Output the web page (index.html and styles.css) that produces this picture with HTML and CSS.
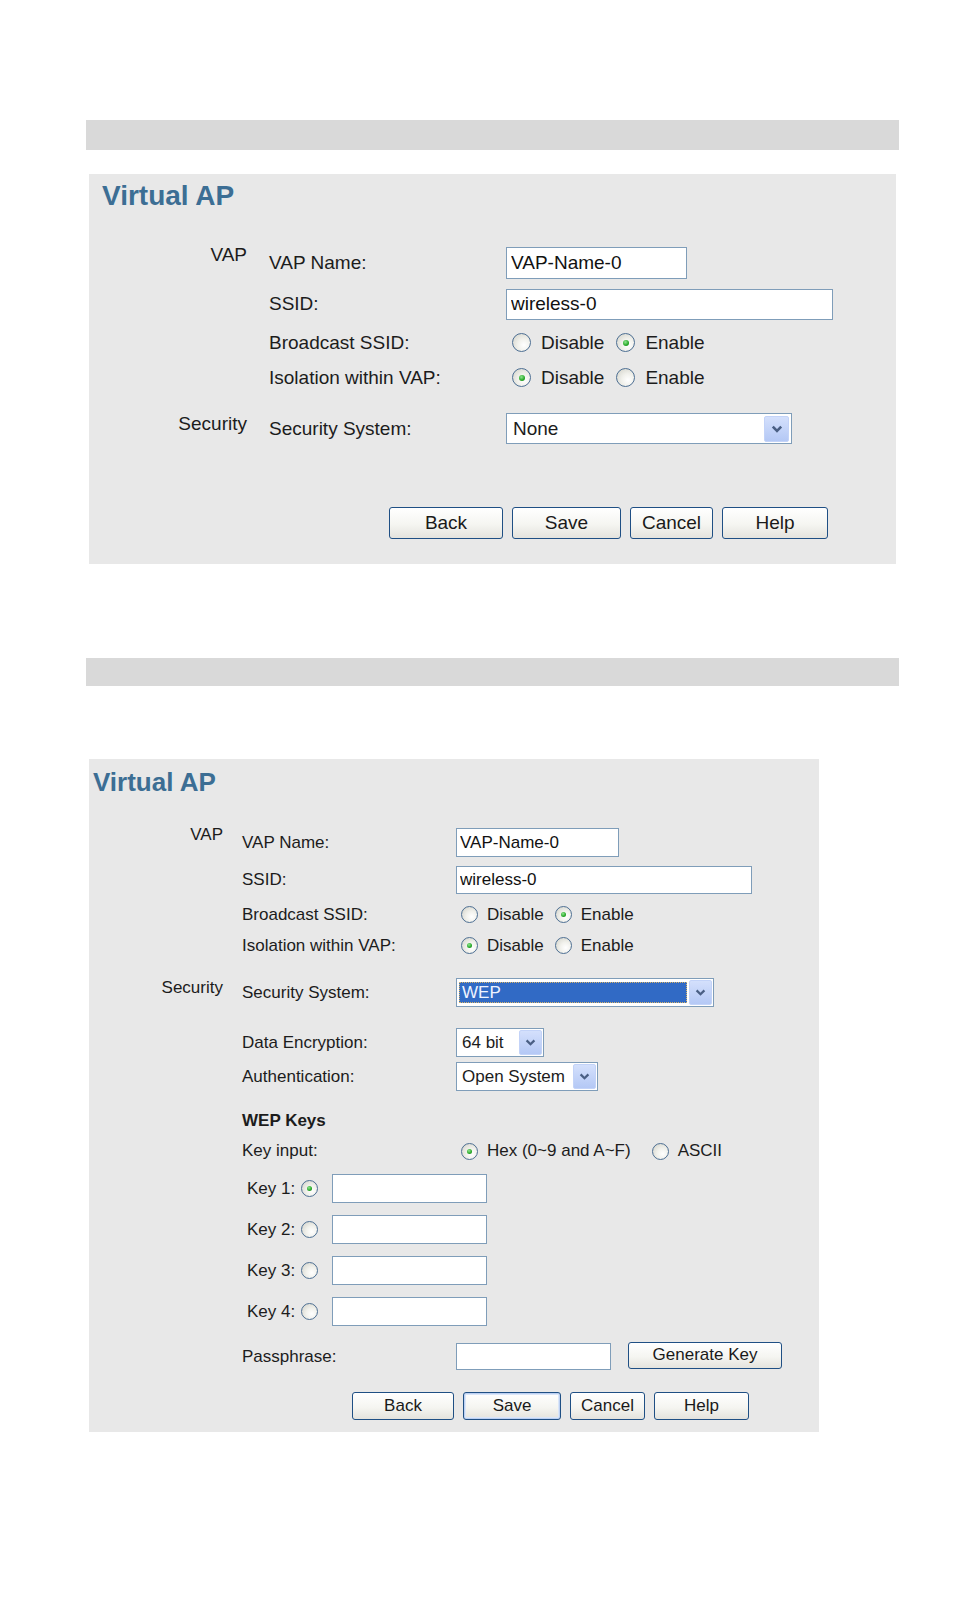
FILE: index.html
```html
<!DOCTYPE html>
<html lang="en">
<head>
    <meta charset="UTF-8">
    <meta name="viewport" content="width=device-width, initial-scale=1.0">
    <title>Virtual AP</title>
    <link rel="stylesheet" href="styles.css">
</head>
<body>
    <div class="page">
        <div class="bar"></div>

        <!-- Virtual AP, security off -->
        <section class="panel panel-a">
            <h2 class="panel-title">Virtual AP</h2>

            <div class="group">
                <div class="group-name">VAP</div>
                <div class="group-rows">
                    <div class="row row-name">
                        <span class="row-label">VAP Name:</span>
                        <input class="textbox box-name" type="text" value="VAP-Name-0">
                    </div>
                    <div class="row row-ssid">
                        <span class="row-label">SSID:</span>
                        <input class="textbox box-ssid" type="text" value="wireless-0">
                    </div>
                    <div class="row row-radio">
                        <span class="row-label">Broadcast SSID:</span>
                        <span class="choices">
                            <span class="opt"><span class="radio"></span>Disable</span>
                            <span class="opt"><span class="radio on"></span>Enable</span>
                        </span>
                    </div>
                    <div class="row row-radio">
                        <span class="row-label">Isolation within VAP:</span>
                        <span class="choices">
                            <span class="opt"><span class="radio on"></span>Disable</span>
                            <span class="opt"><span class="radio"></span>Enable</span>
                        </span>
                    </div>
                </div>
            </div>

            <div class="group group-security">
                <div class="group-name">Security</div>
                <div class="group-rows">
                    <div class="row row-select">
                        <span class="row-label">Security System:</span>
                        <div class="select sel-security">
                            <span class="select-value">None</span>
                            <span class="select-arrow">
                                <svg width="12" height="8" viewBox="0 0 12 8"><path d="M1.8 1.6 L6 5.8 L10.2 1.6" fill="none" stroke="#4a5f84" stroke-width="2.6"/></svg>
                            </span>
                        </div>
                    </div>
                </div>
            </div>

            <div class="actions">
                <button class="btn btn-back">Back</button>
                <button class="btn btn-save">Save</button>
                <button class="btn btn-cancel">Cancel</button>
                <button class="btn btn-help">Help</button>
            </div>
        </section>

        <div class="bar bar-second"></div>

        <!-- Virtual AP, WEP selected -->
        <section class="panel panel-b">
            <h2 class="panel-title">Virtual AP</h2>

            <div class="group">
                <div class="group-name">VAP</div>
                <div class="group-rows">
                    <div class="row row-name">
                        <span class="row-label">VAP Name:</span>
                        <input class="textbox box-name" type="text" value="VAP-Name-0">
                    </div>
                    <div class="row row-ssid">
                        <span class="row-label">SSID:</span>
                        <input class="textbox box-ssid" type="text" value="wireless-0">
                    </div>
                    <div class="row row-radio">
                        <span class="row-label">Broadcast SSID:</span>
                        <span class="choices">
                            <span class="opt"><span class="radio"></span>Disable</span>
                            <span class="opt"><span class="radio on"></span>Enable</span>
                        </span>
                    </div>
                    <div class="row row-radio">
                        <span class="row-label">Isolation within VAP:</span>
                        <span class="choices">
                            <span class="opt"><span class="radio on"></span>Disable</span>
                            <span class="opt"><span class="radio"></span>Enable</span>
                        </span>
                    </div>
                </div>
            </div>

            <div class="group group-security">
                <div class="group-name">Security</div>
                <div class="group-rows">
                    <div class="row row-select">
                        <span class="row-label">Security System:</span>
                        <div class="select sel-security">
                            <span class="select-value picked">WEP</span>
                            <span class="select-arrow">
                                <svg width="11" height="7" viewBox="0 0 11 7"><path d="M1.6 1.4 L5.5 5.2 L9.4 1.4" fill="none" stroke="#4a5f84" stroke-width="2.3"/></svg>
                            </span>
                        </div>
                    </div>
                    <div class="row row-enc">
                        <span class="row-label">Data Encryption:</span>
                        <div class="select sel-enc">
                            <span class="select-value">64 bit</span>
                            <span class="select-arrow">
                                <svg width="11" height="7" viewBox="0 0 11 7"><path d="M1.6 1.4 L5.5 5.2 L9.4 1.4" fill="none" stroke="#4a5f84" stroke-width="2.3"/></svg>
                            </span>
                        </div>
                    </div>
                    <div class="row row-auth">
                        <span class="row-label">Authentication:</span>
                        <div class="select sel-auth">
                            <span class="select-value">Open System</span>
                            <span class="select-arrow">
                                <svg width="11" height="7" viewBox="0 0 11 7"><path d="M1.6 1.4 L5.5 5.2 L9.4 1.4" fill="none" stroke="#4a5f84" stroke-width="2.3"/></svg>
                            </span>
                        </div>
                    </div>

                    <div class="row row-heading">WEP Keys</div>
                    <div class="row row-keyinput">
                        <span class="row-label">Key input:</span>
                        <span class="choices choices-wide">
                            <span class="opt"><span class="radio on"></span>Hex (0~9 and A~F)</span>
                            <span class="opt"><span class="radio"></span>ASCII</span>
                        </span>
                    </div>
                    <div class="row row-key">
                        <span class="key-label">Key 1:</span>
                        <span class="radio on"></span>
                        <input class="textbox box-key" type="text" value="">
                    </div>
                    <div class="row row-key">
                        <span class="key-label">Key 2:</span>
                        <span class="radio"></span>
                        <input class="textbox box-key" type="text" value="">
                    </div>
                    <div class="row row-key">
                        <span class="key-label">Key 3:</span>
                        <span class="radio"></span>
                        <input class="textbox box-key" type="text" value="">
                    </div>
                    <div class="row row-key">
                        <span class="key-label">Key 4:</span>
                        <span class="radio"></span>
                        <input class="textbox box-key" type="text" value="">
                    </div>
                    <div class="row row-pass">
                        <span class="row-label">Passphrase:</span>
                        <input class="textbox box-pass" type="text" value="">
                        <button class="btn btn-generate">Generate Key</button>
                    </div>
                </div>
            </div>

            <div class="actions">
                <button class="btn btn-back">Back</button>
                <button class="btn btn-save btn-default">Save</button>
                <button class="btn btn-cancel">Cancel</button>
                <button class="btn btn-help">Help</button>
            </div>
        </section>
    </div>
</body>
</html>
```

FILE: styles.css
```css
* {
    box-sizing: border-box;
}

body {
    margin: 0;
    background: #ffffff;
    font-family: "Liberation Sans", Arial, sans-serif;
    color: #1c1c1c;
}

.page {
    padding-top: 120px;
    padding-bottom: 40px;
}

.bar {
    margin-left: 86px;
    width: 813px;
    height: 30px;
    background: #d9d9d9;
}

.bar-second {
    margin-top: 94px;
    height: 28px;
}

.panel {
    margin-left: 89px;
    background: #e8e8e8;
}

.panel-a {
    width: 807px;
    margin-top: 24px;
    padding: 5px 0 25px;
    font-size: 19px;
}

.panel-b {
    width: 730px;
    margin-top: 73px;
    padding: 8px 0 12px;
    font-size: 17px;
}

.panel-title {
    margin: 0;
    font-weight: bold;
    color: #3c6e94;
}

.panel-a .panel-title {
    font-size: 28px;
    line-height: 34px;
    padding-left: 13px;
    margin-bottom: 30px;
}

.panel-b .panel-title {
    font-size: 26px;
    line-height: 30px;
    padding-left: 4px;
    margin-bottom: 27px;
}

/* section column + rows */
.group {
    display: flex;
}

.group-name {
    flex: none;
    text-align: right;
    line-height: 1;
    padding-top: 2px;
}

.group-security .group-name {
    padding-top: 5px;
}

.panel-a .group-name {
    width: 158px;
    margin-right: 22px;
}

.panel-b .group-name {
    width: 134px;
    margin-right: 19px;
}

.panel-a .group-security {
    margin-top: 13.5px;
}

.panel-b .group-security {
    margin-top: 13px;
}

.group-rows {
    flex: 1;
}

.row {
    display: flex;
    align-items: center;
}

.row-label {
    flex: none;
}

.panel-a .row-label {
    width: 237px;
}

.panel-b .row-label {
    width: 214px;
}

/* row heights */
.panel-a .row-name { height: 40px; }
.panel-a .row-ssid { height: 42px; }
.panel-a .row-radio { height: 35px; }
.panel-a .row-select { height: 40px; }

.panel-b .row-name { height: 37px; }
.panel-b .row-ssid { height: 38px; }
.panel-b .row-radio { height: 31px; }
.panel-b .row-select { height: 37px; }
.panel-b .row-enc { height: 37px; margin-top: 13px; }
.panel-b .row-auth { height: 31px; }
.panel-b .row-heading { height: 27px; margin-top: 15px; font-weight: bold; }
.panel-b .row-keyinput { height: 34px; }
.panel-b .row-key { height: 41px; padding-left: 5px; }
.panel-b .row-pass { height: 41px; margin-top: 4px; }

/* text boxes */
.textbox {
    margin: 0;
    border: 1px solid #7f9db9;
    background: #ffffff;
    font: inherit;
    color: #111111;
    padding: 0 3px;
    outline: none;
}

.panel-a .textbox {
    padding-left: 4px;
}

.panel-a .box-name { width: 181px; height: 32px; }
.panel-a .box-ssid { width: 327px; height: 31px; }

.panel-b .box-name { width: 163px; height: 29px; }
.panel-b .box-ssid { width: 296px; height: 28px; }
.panel-b .box-key { width: 155px; height: 29px; margin-left: 14px; }
.panel-b .box-pass { width: 155px; height: 27px; }

/* radios */
.choices {
    display: flex;
    align-items: center;
}

.opt {
    display: inline-flex;
    align-items: center;
}

.panel-a .choices { gap: 12px; padding-left: 6px; }
.panel-a .opt { gap: 10px; }
.panel-b .choices { gap: 11px; padding-left: 5px; }
.panel-b .opt { gap: 9px; }
.panel-b .choices-wide { gap: 21px; }

.radio {
    flex: none;
    display: inline-flex;
    align-items: center;
    justify-content: center;
    border-radius: 50%;
    border: 1px solid #4d6f93;
    background: radial-gradient(circle at 65% 65%, #ffffff 0%, #f1f1ec 40%, #cfcfc6 100%);
}

.radio.on::after {
    content: "";
    width: 6px;
    height: 6px;
    border-radius: 50%;
    background: radial-gradient(circle at 40% 35%, #8fe68f, #27a827 60%, #1a7a1a);
}

.panel-a .radio { width: 19px; height: 19px; }
.panel-b .radio { width: 17px; height: 17px; }
.panel-b .radio.on::after { width: 5px; height: 5px; }

.key-label {
    flex: none;
    margin-right: 6px;
}

/* drop-downs */
.select {
    display: flex;
    border: 1px solid #7f9db9;
    background: #ffffff;
}

.select-value {
    flex: 1;
    display: flex;
    align-items: center;
    white-space: nowrap;
}

.select-arrow {
    flex: none;
    display: flex;
    align-items: center;
    justify-content: center;
    border: 1px solid #c3d3f8;
    border-radius: 2px;
    background: linear-gradient(#d4e0fc, #b4c8f5);
}

.panel-a .select {
    padding: 2px 2px 1px 2px;
}

.panel-a .select-value {
    padding-left: 4px;
}

.panel-a .select-arrow {
    width: 25px;
}

.panel-a .sel-security { width: 286px; height: 31px; }

.panel-b .select {
    height: 29px;
    padding: 1px 1px 1px 2px;
}

.panel-b .select-value {
    padding-left: 3px;
}

.panel-b .select-arrow {
    width: 23px;
}

.panel-b .sel-security { width: 258px; }
.panel-b .sel-enc { width: 88px; }
.panel-b .sel-auth { width: 142px; }

.select-value.picked {
    margin: 2px 2px 2px 0;
    background: #316ac5;
    color: #eef3ff;
    outline: 1px dotted #d8b46a;
    outline-offset: -1px;
}

/* buttons */
.btn {
    margin: 0;
    padding: 0;
    font: inherit;
    color: #1a1a1a;
    border: 1px solid #1f4f84;
    border-radius: 3px;
    background: linear-gradient(#ffffff, #f5f5f1 55%, #e4e3dd);
    cursor: pointer;
}

.actions {
    display: flex;
    gap: 9px;
}

.panel-a .actions {
    margin-top: 58.5px;
    padding-left: 300px;
}

.panel-a .btn { height: 32px; }
.panel-a .btn-back { width: 114px; }
.panel-a .btn-save { width: 109px; }
.panel-a .btn-cancel { width: 83px; }
.panel-a .btn-help { width: 106px; }

.panel-b .actions {
    margin-top: 15px;
    padding-left: 263px;
}

.panel-b .btn { height: 28px; }
.panel-b .btn-back { width: 102px; }
.panel-b .btn-save { width: 98px; }
.panel-b .btn-cancel { width: 75px; }
.panel-b .btn-help { width: 95px; }

.panel-b .btn-generate {
    width: 154px;
    height: 27px;
    margin-left: 17px;
    margin-top: -3px;
}

.btn-default {
    box-shadow: inset 0 0 0 1px #bcd0f2, inset 0 0 0 2px #dbe6f8;
}
```
